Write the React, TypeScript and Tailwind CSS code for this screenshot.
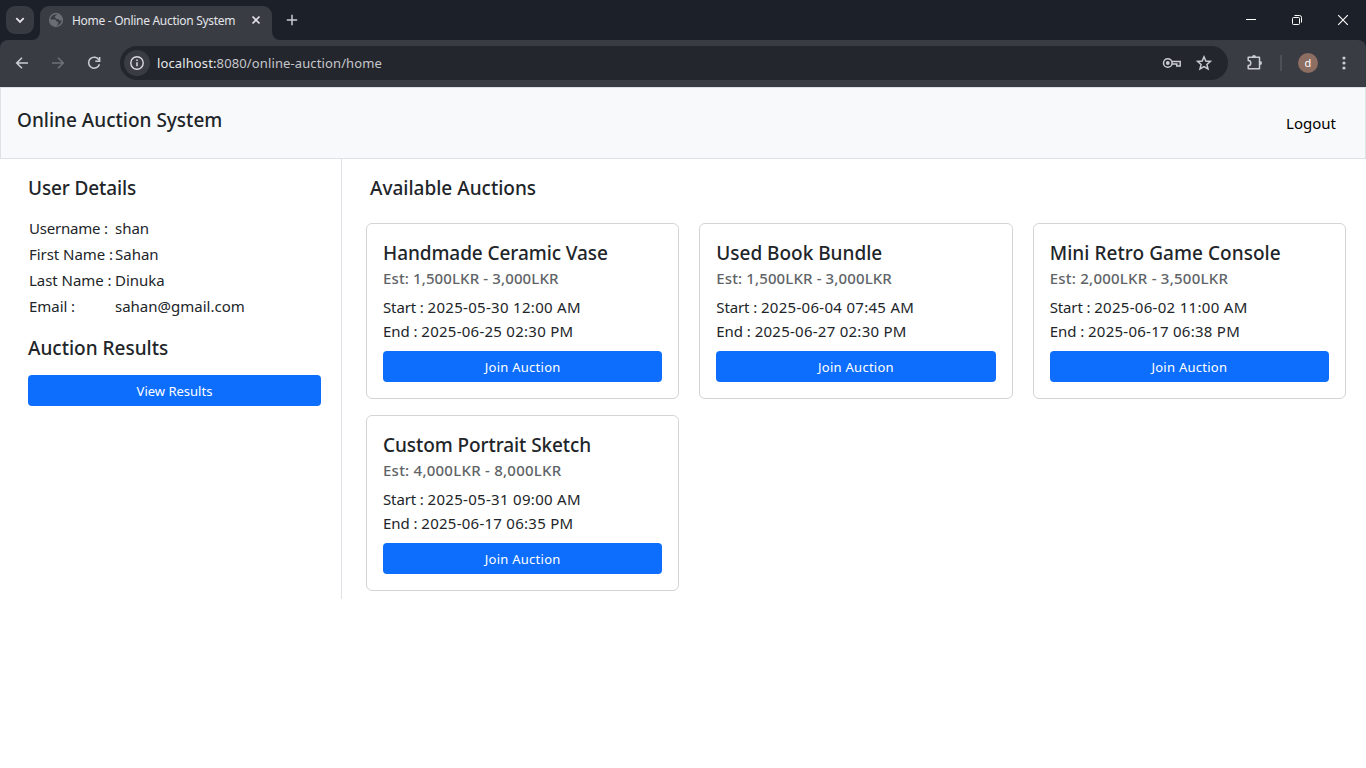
import type { ReactNode } from "react";

type Auction = { title: string; titleClass: string; est: string; estClass: string; start: string; end: string };

const auctions: Auction[] = [
  { title: "Handmade Ceramic Vase", titleClass: "tracking-[-0.08px]", est: "Est: 1,500LKR - 3,000LKR", estClass: "tracking-[0.12px]", start: "2025-05-30 12:00 AM", end: "2025-06-25 02:30 PM" },
  { title: "Used Book Bundle", titleClass: "tracking-[-0.02px]", est: "Est: 1,500LKR - 3,000LKR", estClass: "tracking-[0.12px]", start: "2025-06-04 07:45 AM", end: "2025-06-27 02:30 PM" },
  { title: "Mini Retro Game Console", titleClass: "tracking-[0.05px]", est: "Est: 2,000LKR - 3,500LKR", estClass: "tracking-[0.24px]", start: "2025-06-02 11:00 AM", end: "2025-06-17 06:38 PM" },
  { title: "Custom Portrait Sketch", titleClass: "tracking-[-0.08px]", est: "Est: 4,000LKR - 8,000LKR", estClass: "tracking-[0.24px]", start: "2025-05-31 09:00 AM", end: "2025-06-17 06:35 PM" },
];

const details = [
  { label: "Username :", labelClass: "tracking-[-0.2px]", value: "shan" },
  { label: "First Name :", labelClass: "tracking-[-0.05px]", value: "Sahan" },
  { label: "Last Name :", labelClass: "tracking-[-0.05px]", value: "Dinuka" },
  { label: "Email :", labelClass: "tracking-[-0.05px]", value: "sahan@gmail.com" },
];

function Icon({ children, className = "" }: { children: ReactNode; className?: string }) {
  return (
    <svg viewBox="0 0 20 20" className={`size-5 shrink-0 ${className}`} fill="none" stroke="currentColor" strokeWidth="1.6">
      {children}
    </svg>
  );
}

function TabStrip() {
  return (
    <div className="flex h-10 bg-[#1c2028] pl-1.5">
      <div className="mt-1.5 flex size-7 items-center justify-center rounded-[9px] bg-[#373a41] text-[#e3e5ea]">
        <Icon><path d="M6.3 8.2 10 11.9l3.7-3.7" strokeWidth="1.8" /></Icon>
      </div>
      <svg className="mt-8 ml-[-2px] h-2 w-2 shrink-0" viewBox="0 0 8 8"><path d="M8 0v8H0a8 8 0 0 0 8-8Z" fill="#3a3c43" /></svg>
      <div className="mt-1.5 flex h-[34px] w-[232px] items-center rounded-t-[9px] bg-[#3a3c43] pb-1.5 pl-1.5">
        <Icon>
          <circle cx="10" cy="10" r="6.400" stroke="#6a6d74" strokeWidth="1.500" fill="#3a3c43" />
          <path d="M4 9.500h4.500c2 0 2 1.200 2 2.200h1.700v2.500l-2.200 1.800c-3.500 0-6-2.500-6-6.500ZM11.500 4c-.2 1.400-2.700 1.300-2.700 2.700 0 1.200 1.400.9 1.400 2.200h2.500c0 1.300.8 1.700 2 1.700l1.500-.6c0-3-2-5.500-4.700-6Z" fill="#6a6d74" stroke="none" />
        </Icon>
        <span className="ml-1.5 w-[174px] pt-px text-[12px] tracking-[-0.29px] whitespace-nowrap text-[#e3e5ea]">Home - Online Auction System</span>
        <Icon className="text-[#e3e5ea]"><path d="m6.500 6.500 7 7M13.500 6.500l-7 7" /></Icon>
      </div>
      <svg className="mt-8 h-2 w-2 shrink-0" viewBox="0 0 8 8"><path d="M0 0v8h8a8 8 0 0 1-8-8Z" fill="#3a3c43" /></svg>
      <div className="ml-0.5 flex h-10 items-center text-[#c9ccd2]">
        <Icon><path d="M10 4.800v10.400M4.800 10h10.400" strokeWidth="1.5" /></Icon>
      </div>
      <div className="ml-auto flex h-10 text-white">
        <div className="flex w-[46px] items-center justify-center"><Icon><path d="M5 9.500h10" strokeWidth="1" /></Icon></div>
        <div className="flex w-[46px] items-center justify-center">
          <Icon><rect x="5.500" y="7.500" width="7" height="7" rx="1" strokeWidth="1" /><path d="M7.500 5.500h5a2 2 0 0 1 2 2v5" strokeWidth="1" /></Icon>
        </div>
        <div className="flex w-[46px] items-center justify-center"><Icon><path d="m5.200 5.200 9.600 9.600M14.800 5.200l-9.600 9.600" strokeWidth="1.100" /></Icon></div>
      </div>
    </div>
  );
}

function Toolbar() {
  return (
    <div className="bg-[#1c2028]">
      <div className="flex h-[47px] items-start rounded-t-lg bg-[#3a3c43] text-[#c9ccd2]">
        <div className="mt-[13px] flex gap-4 pl-3">
          <Icon><path d="M16 10H5M10 4.700 4.700 10l5.300 5.300" /></Icon>
          <Icon className="text-[#6d7077]"><path d="M4 10h11M10 4.700l5.300 5.300-5.300 5.300" /></Icon>
          <Icon><path d="M15 7.200A5.500 5.500 0 1 0 15.400 11.200" /><path d="M15.600 4v4.300h-4.300" /></Icon>
        </div>
        <div className="mt-1.5 ml-4 flex h-[34px] w-[1108px] items-center rounded-full bg-[#24262d] pr-[14px] pl-1">
          <div className="flex size-[26px] items-center justify-center rounded-full bg-[#3a3c43] text-[#d9dbe0]">
            <Icon><circle cx="10" cy="10" r="6.200" strokeWidth="1.400" /><path d="M10 9.300v4M10 6.500v1.500" strokeWidth="1.500" /></Icon>
          </div>
          <span className="ml-[7px] pt-0.5 text-[13px] tracking-[0.12px] whitespace-nowrap text-[#c4c6cb]"><span className="text-[#e6e8eb]">localhost:</span>8080/online-auction/home</span>
          <Icon className="ml-auto">
            <circle cx="5.800" cy="10" r="4.300" strokeWidth="1.500" /><circle cx="5.800" cy="10" r="1.900" fill="currentColor" stroke="none" />
            <path d="M9.800 8.500h8.400v4.500h-3.400v-2H9.800" strokeWidth="1.500" />
          </Icon>
          <Icon className="ml-3"><path d="m10 3.800 1.800 4.200 4.600.4-3.500 3 1.100 4.500-4-2.400-4 2.400 1.100-4.500-3.500-3 4.600-.4Z" strokeWidth="1.500" /></Icon>
        </div>
        <Icon className="mt-[13px] ml-4"><path d="M4.200 4.300H15.500V15.700H4.200V12.600a2.600 2.600 0 0 0 0-5.200Z" strokeLinejoin="round" strokeWidth="1.500" /><path d="M8 4a2 2 0 0 1 4 0ZM16 8a2 2 0 0 1 0 4Z" fill="currentColor" stroke="none" /></Icon>
        <div className="mt-[15px] ml-4 h-4 w-0.5 bg-[#4d5057]" />
        <div className="mt-[13px] ml-4 flex size-5 items-center justify-center rounded-full bg-[#8d6e63] text-[11px] text-white">d</div>
        <Icon className="mt-[13px] ml-4"><g fill="currentColor" stroke="none"><circle cx="10" cy="5" r="1.600" /><circle cx="10" cy="10" r="1.600" /><circle cx="10" cy="15" r="1.600" /></g></Icon>
      </div>
    </div>
  );
}

function Button({ children, className = "" }: { children: ReactNode; className?: string }) {
  return <button className={`block h-[31px] w-full rounded bg-[#0d6efd] pt-0.5 text-[13px] text-white ${className}`}>{children}</button>;
}

function Card({ a }: { a: Auction }) {
  return (
    <div className="h-44 rounded-md border border-[#d3d4d5] pt-[17px] pr-4 pl-4 whitespace-nowrap">
      <h5 className={`text-[19px] leading-6 font-medium ${a.titleClass}`}>{a.title}</h5>
      <h6 className={`mt-1 text-[15px] leading-[19px] font-medium text-[#5f6468] ${a.estClass}`}>{a.est}</h6>
      <p className="mt-[7px] text-[15px] leading-6 tracking-[0.3px]"><span className="tracking-[-0.12px]">Start : </span>{a.start}</p>
      <p className="mb-2 text-[15px] leading-6 tracking-[0.26px]"><span className="tracking-[-0.06px]">End : </span>{a.end}</p>
      <Button className="tracking-[0.26px]">Join Auction</Button>
    </div>
  );
}

export default function App() {
  return (
    <div className="h-screen overflow-hidden bg-white font-['Noto_Sans',sans-serif] text-[#212529]">
      <TabStrip />
      <Toolbar />
      <header className="flex h-[72px] justify-between border border-[#dee2e6] bg-[#f8f9fa] pt-5 pr-[29px] pl-4">
        <h1 className="text-[19px] leading-6 font-medium">Online Auction System</h1>
        <span className="mt-[3px] text-[15px] leading-6 text-black">Logout</span>
      </header>
      <main className="flex">
        <aside className="h-[440px] w-[342px] border-r border-[#dee2e6] pt-[17px] pr-5 pl-7">
          <h2 className="text-[19px] leading-6 font-medium tracking-[-0.12px]">User Details</h2>
          <dl className="mt-[15px] grid grid-cols-[86px_1fr] pl-px text-[15px] leading-[26px] whitespace-nowrap">
            {details.map((d) => (
              <div key={d.label} className="contents"><dt className={d.labelClass}>{d.label}</dt><dd>{d.value}</dd></div>
            ))}
          </dl>
          <h2 className="mt-[17px] mb-[15px] text-[19px] leading-6 font-medium">Auction Results</h2>
          <Button>View Results</Button>
        </aside>
        <section className="flex-1 pt-[17px] pr-5 pl-6">
          <h2 className="mb-[23px] pl-1 text-[19px] leading-6 font-medium">Available Auctions</h2>
          <div className="grid grid-cols-3 gap-x-5 gap-y-4">
            {auctions.map((a) => <Card key={a.title} a={a} />)}
          </div>
        </section>
      </main>
    </div>
  );
}
